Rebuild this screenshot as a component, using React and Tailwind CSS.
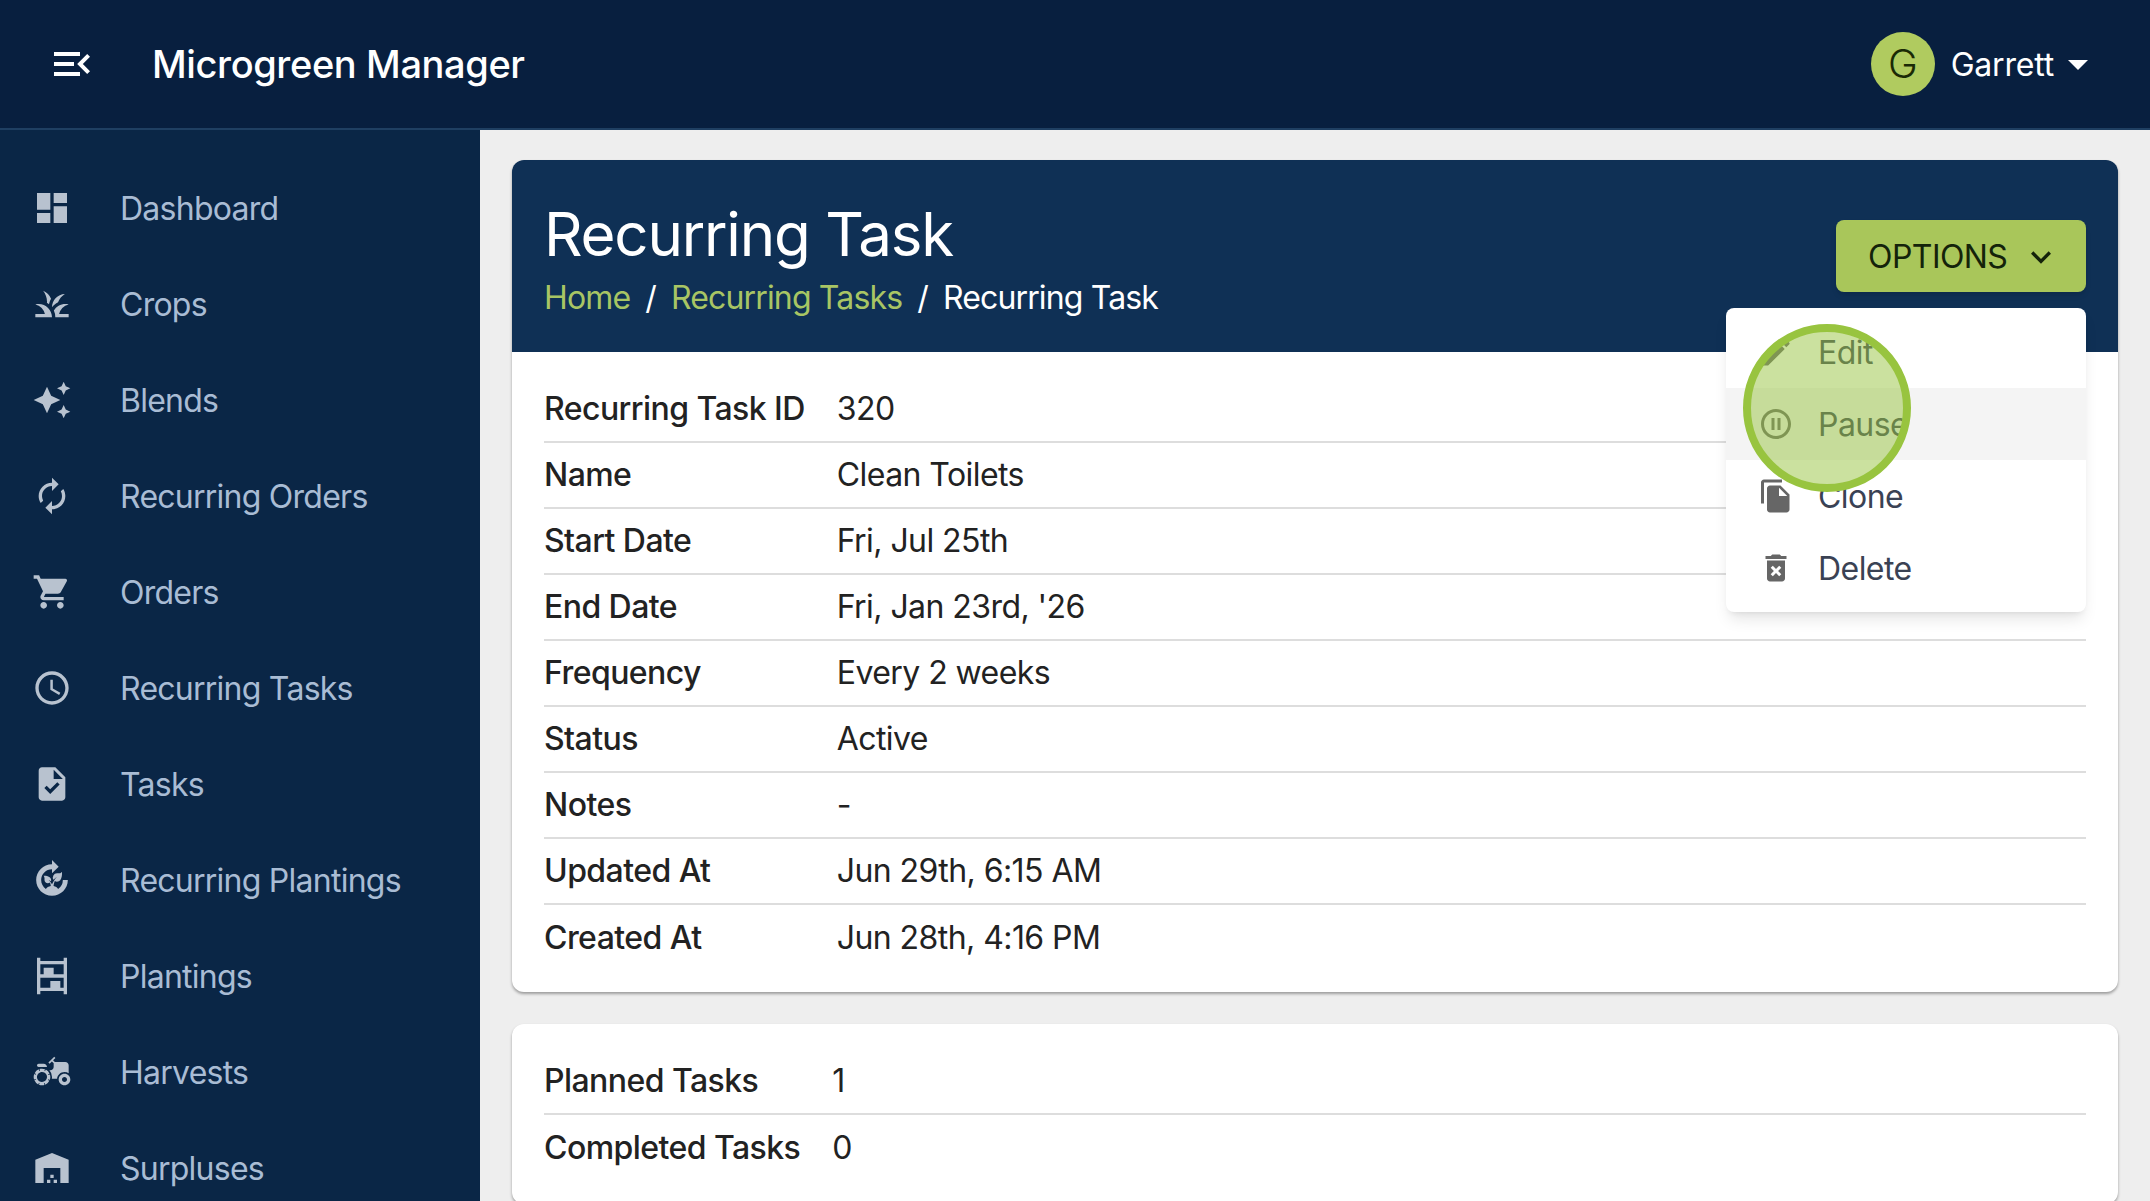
import {
  MdMenuOpen,
  MdArrowDropDown,
  MdDashboard,
  MdGrass,
  MdAutoAwesome,
  MdAutorenew,
  MdShoppingCart,
  MdAccessTime,
  MdTask,
  MdCompost,
  MdShelves,
  MdAgriculture,
  MdWarehouse,
  MdExpandMore,
  MdEdit,
  MdOutlinePauseCircle,
  MdFileCopy,
  MdDeleteForever,
} from "react-icons/md";

const navItems = [
  { label: "Dashboard", icon: MdDashboard },
  { label: "Crops", icon: MdGrass },
  { label: "Blends", icon: MdAutoAwesome },
  { label: "Recurring Orders", icon: MdAutorenew },
  { label: "Orders", icon: MdShoppingCart },
  { label: "Recurring Tasks", icon: MdAccessTime },
  { label: "Tasks", icon: MdTask },
  { label: "Recurring Plantings", icon: MdCompost },
  { label: "Plantings", icon: MdShelves },
  { label: "Harvests", icon: MdAgriculture },
  { label: "Surpluses", icon: MdWarehouse },
];

const details = [
  ["Recurring Task ID", "320"],
  ["Name", "Clean Toilets"],
  ["Start Date", "Fri, Jul 25th"],
  ["End Date", "Fri, Jan 23rd, '26"],
  ["Frequency", "Every 2 weeks"],
  ["Status", "Active"],
  ["Notes", "-"],
  ["Updated At", "Jun 29th, 6:15 AM"],
  ["Created At", "Jun 28th, 4:16 PM"],
];

const counts = [
  ["Planned Tasks", "1"],
  ["Completed Tasks", "0"],
];

const menuItems = [
  { label: "Edit", icon: MdEdit },
  { label: "Pause", icon: MdOutlinePauseCircle, hover: true },
  { label: "Clone", icon: MdFileCopy },
  { label: "Delete", icon: MdDeleteForever },
];

function InfoTable({ rows }) {
  return (
    <table className="w-full border-collapse">
      <tbody>
        {rows.map(([label, value], index) => (
          <tr
            key={label}
            className={`h-[66px] ${index < rows.length - 1 ? "border-b-2 border-[#dddddd]" : ""}`}
          >
            <td className="w-px whitespace-nowrap pr-8 font-medium">{label}</td>
            <td>{value}</td>
          </tr>
        ))}
      </tbody>
    </table>
  );
}

function App() {
  return (
    <div className="h-screen overflow-hidden flex flex-col bg-[#eeeeee] text-[32px] tracking-[-0.56px] text-[#222222] font-['Inter',sans-serif]">
      <header className="h-[130px] shrink-0 flex items-center justify-between bg-[#081f3f] border-b-2 border-[#1f3f62] pl-[48px] pr-[48px] text-white">
        <div className="flex items-center">
          <MdMenuOpen size={48} />
          <div className="ml-[56px] text-[38px] tracking-[-0.38px] font-medium">Microgreen Manager</div>
        </div>
        <div className="flex items-center">
          <div className="w-16 h-16 rounded-full bg-[#b0cb5f] text-[#1a2a05] flex items-center justify-center text-[40px] font-light">
            G
          </div>
          <span className="ml-4 pt-0.5 tracking-[-0.2px]">Garrett</span>
          <MdArrowDropDown size={48} />
        </div>
      </header>

      <div className="flex flex-1 min-h-0">
        <nav className="w-[480px] shrink-0 bg-[#0a2646] pt-[30px]">
          {navItems.map(({ label, icon: Icon }) => (
            <div key={label} className="h-[96px] flex items-center pl-[32px]">
              <Icon size={40} className="text-[#b8c2cf] shrink-0" />
              <span className="ml-[48px] pt-0.5 tracking-[-0.75px] text-[#a9bcd4]">{label}</span>
            </div>
          ))}
        </nav>

        <main className="flex-1 min-w-0 pt-[30px] px-[32px]">
          <section className="relative rounded-xl bg-white shadow-[0_2px_3px_rgba(0,0,0,0.35)] mb-8">
            <div className="h-[192px] rounded-t-xl bg-[#0f3055] px-8 pt-[38px] flex justify-between">
              <div>
                <h1 className="text-[60px] leading-[72px] tracking-[-1.2px] text-white">Recurring Task</h1>
                <div className="flex gap-[15px] leading-[56px] tracking-[-0.85px] text-white">
                  <span className="text-[#a8c564]">Home</span>
                  <span>/</span>
                  <span className="text-[#a8c564]">Recurring Tasks</span>
                  <span>/</span>
                  <span>Recurring Task</span>
                </div>
              </div>
              <div className="relative mt-[22px]">
                <button className="w-[250px] h-[72px] rounded-lg bg-[#a9c65a] text-[#14230a] flex items-center pl-8 pt-0.5 shadow-md">
                  OPTIONS
                  <MdExpandMore size={40} className="ml-[14px]" />
                </button>
                <div className="absolute z-10 right-0 top-[88px] w-[360px] h-[304px] py-2 rounded-lg bg-white shadow-lg text-[#3a4254]">
                  {menuItems.map(({ label, icon: Icon, hover }) => (
                    <div
                      key={label}
                      className={`h-[72px] flex items-center pl-8 ${hover ? "bg-[#f4f4f4]" : ""}`}
                    >
                      <Icon size={36} className="text-[#666666] shrink-0" />
                      <span className="ml-[24px] pt-0.5">{label}</span>
                    </div>
                  ))}
                  <div className="absolute left-[17px] top-[16px] w-[168px] h-[168px] rounded-full border-8 border-[#98c43f] bg-[#98c43f]/50"></div>
                </div>
              </div>
            </div>
            <div className="px-8 pt-6 pb-[22px]">
              <InfoTable rows={details} />
            </div>
          </section>

          <section className="rounded-xl bg-white px-8 py-6 shadow-[0_2px_3px_rgba(0,0,0,0.35)]">
            <InfoTable rows={counts} />
          </section>
        </main>
      </div>
    </div>
  );
}

export default App;
